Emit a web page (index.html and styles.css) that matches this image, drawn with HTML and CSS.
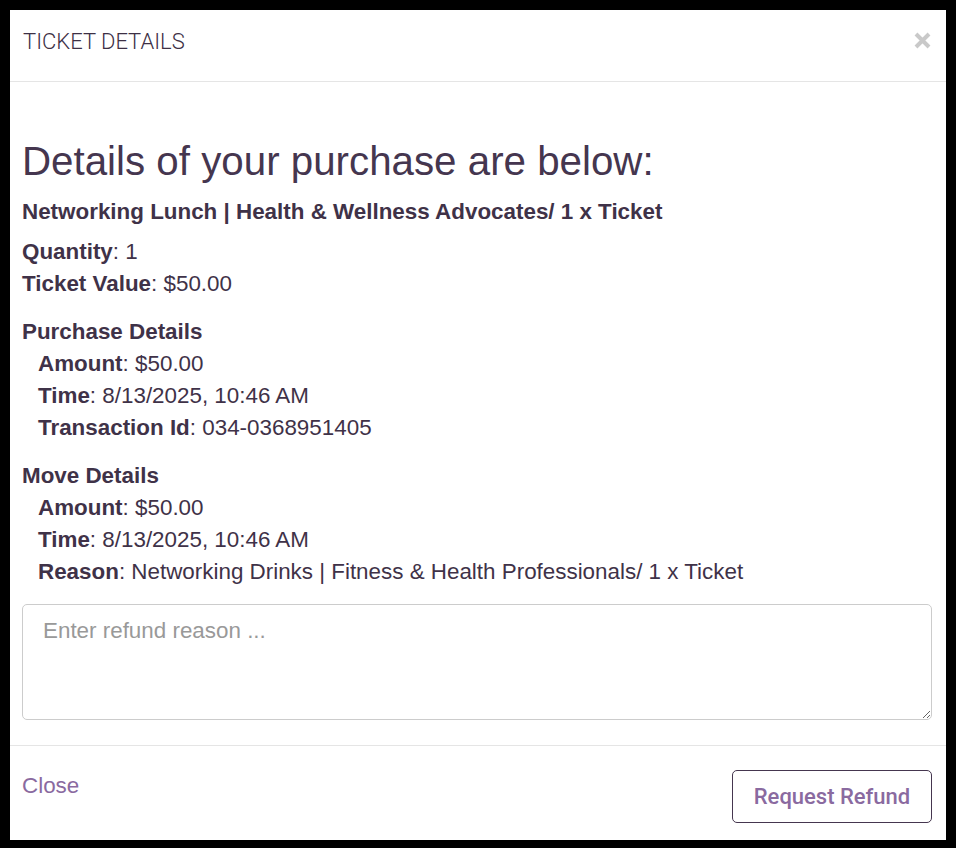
FILE: index.html
```html
<!DOCTYPE html>
<html lang="en">
<head>
  <meta charset="UTF-8">
  <meta name="viewport" content="width=device-width, initial-scale=1.0">
  <title>Ticket Details</title>
  <link rel="stylesheet" href="styles.css">
</head>
<body>
  <div class="modal">
    <div class="modal-header">
      <div class="modal-title">TICKET DETAILS</div>
      <button type="button" class="close-x" aria-label="Close">
        <svg width="17" height="17" viewBox="0 0 17 17">
          <path d="M2 2 L15 15 M15 2 L2 15" stroke="#c9c9c9" stroke-width="4" stroke-linecap="butt"/>
        </svg>
      </button>
    </div>

    <div class="modal-body">
      <h1>Details of your purchase are below:</h1>
      <div class="ticket-name">Networking Lunch | Health &amp; Wellness Advocates/ 1 x Ticket</div>

      <div class="group">
        <div class="row"><b>Quantity</b>: 1</div>
        <div class="row"><b>Ticket Value</b>: $50.00</div>
      </div>

      <div class="group">
        <div class="row"><b>Purchase Details</b></div>
        <div class="row sub"><b>Amount</b>: $50.00</div>
        <div class="row sub"><b>Time</b>: 8/13/2025, 10:46 AM</div>
        <div class="row sub"><b>Transaction Id</b>: 034-0368951405</div>
      </div>

      <div class="group">
        <div class="row"><b>Move Details</b></div>
        <div class="row sub"><b>Amount</b>: $50.00</div>
        <div class="row sub"><b>Time</b>: 8/13/2025, 10:46 AM</div>
        <div class="row sub"><b>Reason</b>: Networking Drinks | Fitness &amp; Health Professionals/ 1 x Ticket</div>
      </div>

      <textarea class="refund-reason" placeholder="Enter refund reason ..."></textarea>
    </div>

    <div class="modal-footer">
      <a href="#" class="close-link">Close</a>
      <button type="button" class="refund-button">Request Refund</button>
    </div>
  </div>
</body>
</html>
```

FILE: styles.css
```css
body {
  margin: 0;
  padding: 0;
  background-color: #000;
  font-family: "Liberation Sans", Arial, sans-serif;
  color: #3f3248;
}

.modal {
  margin: 10px 10px 8px 10px;
  height: 830px;
  background-color: #fff;
  display: flex;
  flex-direction: column;
}

.modal-header {
  height: 71px;
  border-bottom: 1px solid #e5e5e5;
  display: flex;
  justify-content: space-between;
  align-items: flex-start;
  padding: 0 15px 0 13px;
}

.modal-title {
  font-family: Roboto, sans-serif;
  font-weight: 300;
  font-size: 22px;
  line-height: 26px;
  padding-top: 19px;
  color: #3d3045;
}

.close-x {
  background: none;
  border: none;
  padding: 0;
  margin-top: 22px;
  cursor: pointer;
}

.modal-body {
  padding: 57px 14px 24px 12px;
  flex: 1;
}

.modal-body h1 {
  margin: 0 0 11px 0;
  font-size: 40.3px;
  font-weight: normal;
  line-height: 46px;
  color: #45364f;
}

.ticket-name {
  font-weight: bold;
  font-size: 22.4px;
  line-height: 32px;
  margin-bottom: 8px;
}

.group {
  margin-bottom: 16px;
}

.row {
  font-size: 22.4px;
  line-height: 32px;
}

.row.sub {
  padding-left: 16px;
}

.refund-reason {
  display: block;
  box-sizing: border-box;
  width: 100%;
  height: 116px;
  margin-top: 16px;
  padding: 13px 20px;
  border: 1px solid #ccc;
  border-radius: 5px;
  font-family: "Liberation Sans", Arial, sans-serif;
  font-size: 22.4px;
  color: #3f3248;
}

.refund-reason::placeholder {
  color: #999;
}

.modal-footer {
  border-top: 1px solid #e5e5e5;
  padding: 24px 14px 0 12px;
  height: 70px;
  display: flex;
  justify-content: space-between;
  align-items: flex-start;
}

.close-link {
  font-size: 22.4px;
  line-height: 32px;
  color: #8a6aa0;
  text-decoration: none;
}

.refund-button {
  width: 200px;
  height: 53px;
  background: #fff;
  border: 1px solid #45364f;
  border-radius: 5px;
  font-family: Roboto, sans-serif;
  font-weight: 500;
  font-size: 22px;
  color: #8a6aa0;
  cursor: pointer;
}
```
